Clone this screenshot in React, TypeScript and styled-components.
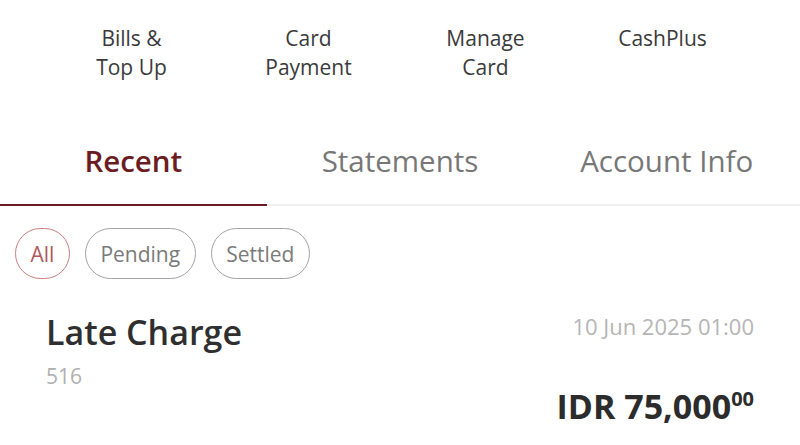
import React from 'react'
import styled, { createGlobalStyle } from 'styled-components'

const GlobalStyle = createGlobalStyle`
  html, body {
    margin: 0;
    padding: 0;
    background: #fff;
    font-family: 'Open Sans', 'Noto Sans', sans-serif;
  }
`

const Page = styled.div`
  width: 800px;
  height: 445px;
  overflow: hidden;
  background: #fff;
`

const MenuRow = styled.ul`
  display: grid;
  grid-template-columns: repeat(4, 177px);
  margin: 0;
  padding: 24px 0 0 43px;
  list-style: none;
`

const MenuItem = styled.li`
  text-align: center;
  color: #3a3a3a;
  font-size: 21px;
  line-height: 29px;
`

const TabBar = styled.div`
  display: grid;
  grid-template-columns: repeat(3, 1fr);
  margin-top: 36px;
  border-bottom: 2px solid #f0f0f0;
`

const Tab = styled.button<{ active?: boolean }>`
  position: relative;
  height: 86px;
  padding: 0 0 2px;
  border: none;
  background: none;
  font-family: inherit;
  font-size: 29.5px;
  color: ${({ active }) => (active ? '#6b1c22' : '#777')};
  font-weight: ${({ active }) => (active ? 600 : 400)};

  &::after {
    content: '';
    display: ${({ active }) => (active ? 'block' : 'none')};
    position: absolute;
    left: 0;
    right: 0;
    bottom: -2px;
    height: 2px;
    background: #6b1c22;
  }
`

const FilterRow = styled.div`
  display: flex;
  gap: 15px;
  padding: 22px 0 0 15px;
`

const Chip = styled.button<{ active?: boolean }>`
  height: 51px;
  padding: 0 14.5px;
  border-radius: 26px;
  border: 1.5px solid ${({ active }) => (active ? '#c77d80' : '#a3a3a3')};
  background: #fff;
  font-family: inherit;
  font-size: 21px;
  color: ${({ active }) => (active ? '#b0575c' : '#7a7a7a')};
`

const Transaction = styled.div`
  display: flex;
  justify-content: space-between;
  padding: 30px 46px 0 46px;
`

const Left = styled.div`
  display: flex;
  flex-direction: column;
`

const Title = styled.div`
  font-size: 34px;
  font-weight: 600;
  color: #2f2f2f;
  line-height: 46px;
`

const Code = styled.div`
  margin-top: 6px;
  font-size: 21px;
  color: #b0b0b0;
  line-height: 30px;
`

const Right = styled.div`
  display: flex;
  flex-direction: column;
  align-items: flex-end;
`

const DateText = styled.div`
  margin-top: 2px;
  font-size: 22px;
  color: #b5b5b5;
  line-height: 30px;
`

const Amount = styled.div`
  margin-top: 43px;
  font-size: 34px;
  font-weight: 700;
  color: #2c2c2c;
  line-height: 44px;

  sup {
    font-size: 20px;
    vertical-align: 13px;
    line-height: 0;
  }
`

const menu = [
  ['Bills &', 'Top Up'],
  ['Card', 'Payment'],
  ['Manage', 'Card'],
  ['CashPlus'],
]

export default function App() {
  return (
    <Page>
      <GlobalStyle />
      <MenuRow>
        {menu.map((lines) => (
          <MenuItem key={lines.join(' ')}>
            {lines.map((l) => (
              <div key={l}>{l}</div>
            ))}
          </MenuItem>
        ))}
      </MenuRow>

      <TabBar>
        <Tab active>Recent</Tab>
        <Tab>Statements</Tab>
        <Tab>Account Info</Tab>
      </TabBar>

      <FilterRow>
        <Chip active>All</Chip>
        <Chip>Pending</Chip>
        <Chip>Settled</Chip>
      </FilterRow>

      <Transaction>
        <Left>
          <Title>Late Charge</Title>
          <Code>516</Code>
        </Left>
        <Right>
          <DateText>10 Jun 2025 01:00</DateText>
          <Amount>
            IDR 75,000<sup>00</sup>
          </Amount>
        </Right>
      </Transaction>
    </Page>
  )
}
